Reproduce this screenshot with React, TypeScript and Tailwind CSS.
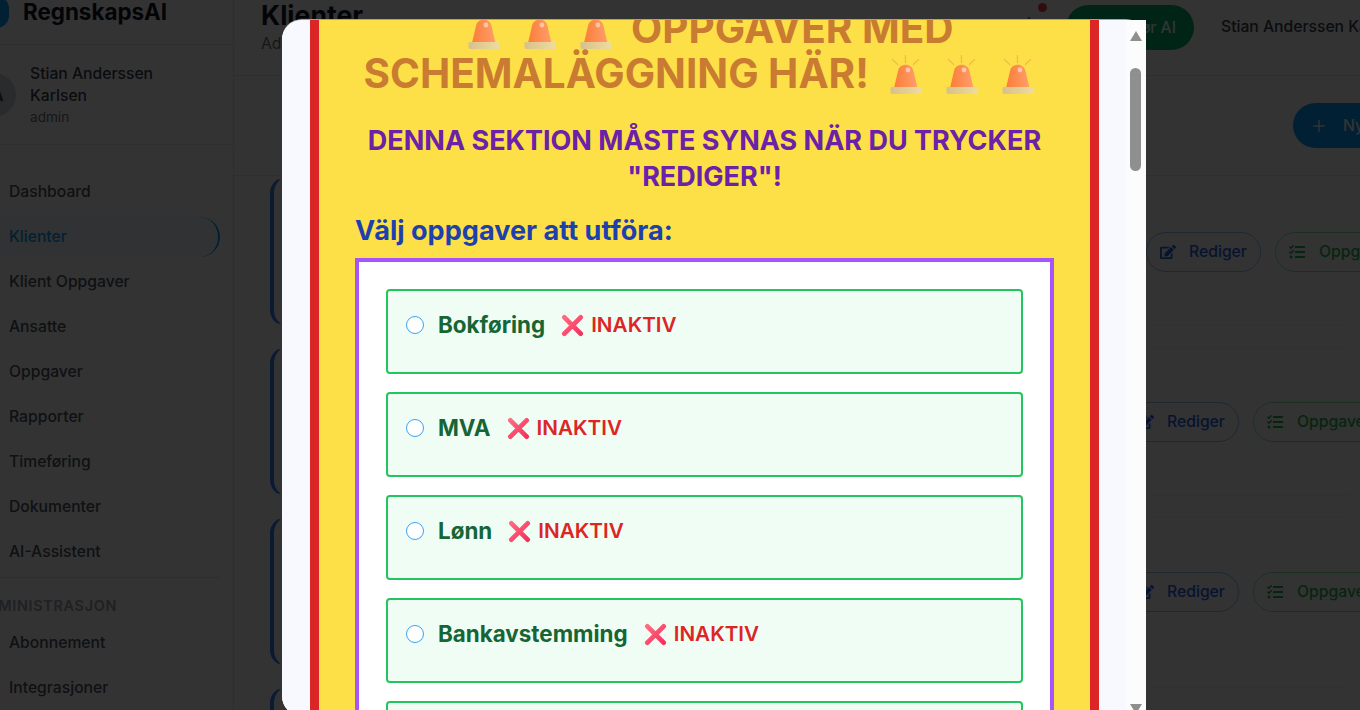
import { Plus } from "lucide-react";
import { FaEdit, FaTasks, FaRegBell } from "react-icons/fa";

function Siren() {
  return (
    <svg viewBox="0 0 32 39" className="h-[39px] w-[32px] shrink-0">
      <defs>
        <linearGradient id="dome" x1="0" x2="1" y1="0" y2="0">
          <stop offset="0" stopColor="#fb7d38" />
          <stop offset="1" stopColor="#ff9e6c" />
        </linearGradient>
        <linearGradient id="base" x1="0" x2="1" y1="0" y2="0">
          <stop offset="0" stopColor="#d6c18c" />
          <stop offset="1" stopColor="#eedc9e" />
        </linearGradient>
      </defs>
      <path d="M2.5 4.5 L7.5 9.5 M15.5 0.5 L15.5 7.5 M28.5 4.5 L23.5 9.5" stroke="#f6b84c" strokeWidth="1.4" strokeLinecap="round" />
      <path d="M4 33 L8 16 C9.5 7.5 22 7.5 23.5 16 L27.5 33 Z" fill="url(#dome)" />
      <circle cx="18" cy="15" r="2.4" fill="#ffc6a8" />
      <rect x="0.5" y="32" width="31" height="7" rx="1.2" fill="url(#base)" />
    </svg>
  );
}

function Sirens({ className }: { className: string }) {
  return (
    <span className={`inline-flex gap-[24px] align-[-6px] ${className}`}>
      <Siren /><Siren /><Siren />
    </span>
  );
}

function CrossMark() {
  return (
    <svg viewBox="0 0 24 24" className="ml-[16px] h-[23px] w-[23px] shrink-0">
      <defs>
        <linearGradient id="cross" x1="0" x2="1" y1="0" y2="1">
          <stop offset="0" stopColor="#ff6b81" />
          <stop offset="1" stopColor="#f4325c" />
        </linearGradient>
      </defs>
      <path d="M3.5 3.5 L20.5 20.5 M20.5 3.5 L3.5 20.5" stroke="url(#cross)" strokeWidth="5" strokeLinecap="round" />
    </svg>
  );
}

const navTop = ["Dashboard", "Klienter", "Klient Oppgaver", "Ansatte", "Oppgaver", "Rapporter", "Timeføring", "Dokumenter", "AI-Assistent"];

function Sidebar() {
  return (
    <aside className="w-[234px] shrink-0 border-r border-gray-200 bg-white">
      <div className="flex h-[45px] items-start border-b border-gray-200">
        <div className="mt-[-4px] ml-[-16px] h-[32px] w-[25px] rounded-full bg-[#0a9fff]" />
        <span className="mt-[-2px] ml-[14px] text-[22.4px] leading-[28px] font-bold text-[#111827]">RegnskapsAI</span>
      </div>
      <div className="flex h-[100px] items-center gap-[14px] border-b border-gray-200">
        <div className="ml-[-28px] flex h-[44px] w-[44px] items-center justify-center rounded-full bg-gray-300 pl-[6px] text-[18px] font-semibold text-[#374151]">A</div>
        <div className="pt-[2px]">
          <div className="text-[15.7px] leading-[22px] font-medium text-[#374151]">Stian Anderssen<br />Karlsen</div>
          <div className="text-[13.6px] leading-[21px] text-[#6b7280]">admin</div>
        </div>
      </div>
      <nav className="pt-[27px] pr-[13px]">
        {navTop.map((n) => (
          <div
            key={n}
            className={`mb-[5px] flex h-[40px] items-center pl-[9px] text-[15.7px] font-medium ${
              n === "Klienter"
                ? "rounded-r-[20px] border-r-2 border-[#0a9fff] bg-[#f0f9ff] text-[#0a9fff]"
                : "text-[#4b5563]"
            }`}
          >
            {n}
          </div>
        ))}
        <div className="h-px bg-gray-200" />
        <div className="mt-[20px] ml-[-24px] text-[14.4px] leading-[16px] font-semibold tracking-[0.7px] whitespace-nowrap text-[#9ca3af]">ADMINISTRASJON</div>
        <div className="mt-[9px] flex h-[40px] items-center pl-[9px] text-[15.7px] font-medium text-[#4b5563]">Abonnement</div>
        <div className="mt-[5px] flex h-[40px] items-center pl-[9px] text-[15.7px] font-medium text-[#4b5563]">Integrasjoner</div>
      </nav>
    </aside>
  );
}

function ClientCard({ offset }: { offset: string }) {
  return (
    <div className="mb-[21px] flex h-[149px] shrink-0 items-center justify-end rounded-[16px] border-y border-l-4 border-y-gray-100 border-l-[#3b82f6] bg-white">
      <div className={`flex gap-[14px] ${offset}`}>
        <div className="flex h-[40px] w-[115px] items-center justify-center gap-[13px] rounded-full border border-[#93c5fd] text-[15.7px] font-medium text-[#2563eb]">
          <FaEdit size={16} className="shrink-0" />
          Rediger
        </div>
        <div className="flex h-[40px] w-[132px] items-center justify-center gap-[14px] rounded-full border border-[#86efac] text-[15.7px] font-medium text-[#1cb854]">
          <FaTasks size={16} className="shrink-0" />
          Oppgaver
        </div>
      </div>
    </div>
  );
}

function Main() {
  return (
    <main className="flex min-w-0 flex-1 flex-col overflow-hidden bg-white">
      <header className="flex h-[76px] shrink-0 items-start border-b border-gray-200 pl-[27px]">
        <div className="mt-[-5px]">
          <div className="text-[26.6px] leading-[40px] font-bold text-[#111827]">Klienter</div>
          <div className="mt-[-1px] text-[15.7px] leading-[20px] text-[#6b7280]">Administrer klienter</div>
        </div>
        <div className="ml-auto flex items-start">
          <div className="relative mr-[20px] h-[40px] w-[22px]">
            <FaRegBell size={20} className="absolute top-[17px] left-[-5px] text-[#6b7280]" />
            <div className="absolute top-[3px] left-[14px] h-[9px] w-[9px] rounded-full bg-[#ef4444]" />
          </div>
          <div className="mt-[5px] flex h-[45px] w-[128px] items-center justify-end rounded-full bg-[#00b871] pr-[18px] text-[15.7px] font-medium text-white">Spør AI</div>
          <div className="mt-[17px] ml-[27px] w-[139px] overflow-hidden text-[15.7px] leading-[20px] font-medium whitespace-nowrap text-[#374151]">Stian Anderssen Karlsen</div>
        </div>
      </header>
      <div className="flex h-[100px] shrink-0 items-start border-b border-gray-200 pt-[27px]">
        <div className="ml-auto flex h-[45px] w-[67px] items-center gap-[15px] rounded-l-full bg-[#0a9fff] pl-[17px] text-[15.7px] font-medium whitespace-nowrap text-white">
          <Plus size={18} strokeWidth={2} className="shrink-0" /> Ny klient
        </div>
      </div>
      <div className="ml-[36px] flex flex-col pt-px">
        <ClientCard offset="mr-[-47px]" />
        <ClientCard offset="mr-[-25px]" />
        <ClientCard offset="mr-[-25px]" />
        <ClientCard offset="mr-[-25px]" />
      </div>
    </main>
  );
}

function TaskRow({ name }: { name: string }) {
  return (
    <div className="mb-[18px] h-[85px] shrink-0 rounded-[4px] border-2 border-[#22c55e] bg-[#f0fdf4] px-[18px] pt-[18px]">
      <div className="flex h-[32px] items-center">
        <span className="h-[18px] w-[18px] rounded-full border border-[#38a3f5] bg-white" />
        <span className="ml-[14px] text-[22.4px] font-bold text-[#166534]">{name}</span>
        <CrossMark />
        <span className="ml-[7px] text-[20.7px] font-semibold text-[#dc2626]">INAKTIV</span>
      </div>
    </div>
  );
}

function Modal() {
  return (
    <div className="absolute top-[20px] left-[282px] flex h-[696px] w-[864px] rounded-[20px] bg-white shadow-[0_-1px_0_#a3a3a3]">
      <div className="h-full w-[844px] overflow-hidden rounded-l-[20px] bg-[#f8f8ff] pr-[27px] pl-[28px]">
        <div className="mt-[-20px] h-[760px] border-x-[9px] border-[#dc2626] bg-[#fde047] px-[36px]">
          <h1 className="pt-[6px] text-center text-[40.5px] leading-[45px] font-bold text-[#c97b32]">
            <Sirens className="mr-[9px] ml-[13px]" />{" "}
            OPPGAVER MED SCHEMALÄGGNING HÄR!{" "}
            <Sirens className="mr-[12px] ml-[11px]" />
          </h1>
          <p className="mt-[27px] text-center text-[27px] leading-[36px] font-bold text-[#6b21a8]">DENNA SEKTION MÅSTE SYNAS NÄR DU TRYCKER "REDIGER"!</p>
          <h2 className="mt-[18px] text-[27.1px] leading-[36px] font-bold text-[#1e40af]">Välj oppgaver att utföra:</h2>
          <div className="mt-[9px] h-[500px] border-4 border-[#a855f7] bg-white p-[27px]">
            <TaskRow name="Bokføring" />
            <TaskRow name="MVA" />
            <TaskRow name="Lønn" />
            <TaskRow name="Bankavstemming" />
            <div className="h-[85px] rounded-[4px] border-2 border-[#22c55e] bg-[#f0fdf4]" />
          </div>
        </div>
      </div>
      <div className="relative w-[20px] bg-[#fcfcfc]">
        <div className="absolute top-[11px] left-[4px] h-0 w-0 border-x-[6px] border-b-[10px] border-x-transparent border-b-[#8f8f8f]" />
        <div className="absolute top-[48px] left-[4px] h-[103px] w-[11px] rounded-full bg-[#8f8f8f]" />
        <div className="absolute top-[684px] left-[4px] h-0 w-0 border-x-[6px] border-t-[10px] border-x-transparent border-t-[#8f8f8f]" />
      </div>
    </div>
  );
}

export default function App() {
  return (
    <div className="relative h-[710px] w-[1360px] overflow-hidden font-['Inter',sans-serif]">
      <div className="flex h-full">
        <Sidebar />
        <Main />
      </div>
      <div className="absolute inset-0 bg-black/80" />
      <Modal />
    </div>
  );
}
